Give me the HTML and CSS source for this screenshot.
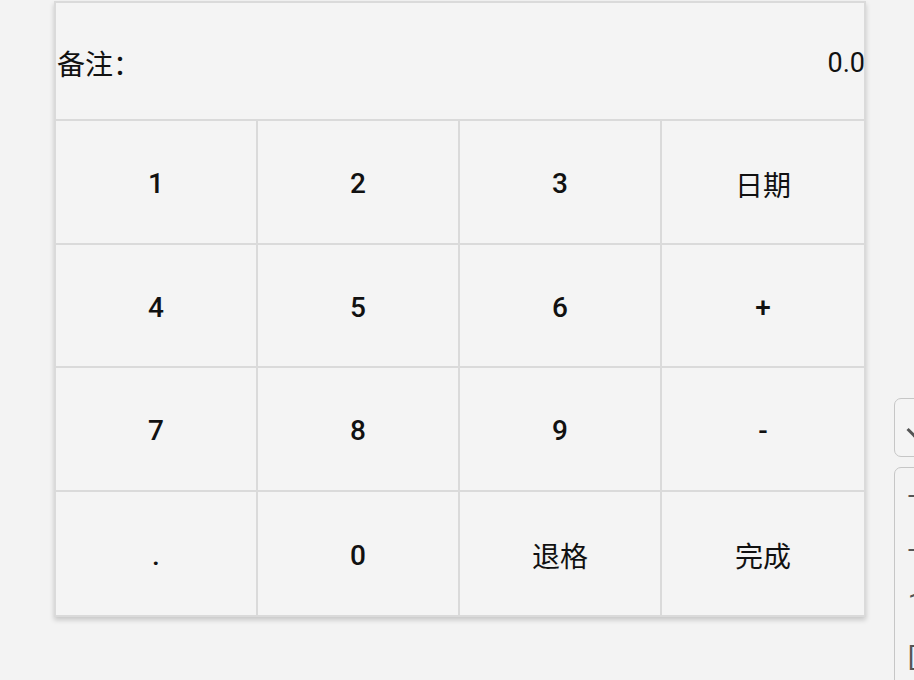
FILE: index.html
```html
<!DOCTYPE html>
<html lang="zh">
<head>
<meta charset="utf-8">
<link rel="stylesheet" href="styles.css">
</head>
<body>
<div class="page">
  <div class="panel">
    <div class="memo">
      <span class="memo-label">备注：</span>
      <span class="memo-amount">0.0</span>
    </div>
    <div class="keys">
      <div class="key">1</div>
      <div class="key">2</div>
      <div class="key">3</div>
      <div class="key cjk">日期</div>
      <div class="key">4</div>
      <div class="key">5</div>
      <div class="key">6</div>
      <div class="key">+</div>
      <div class="key">7</div>
      <div class="key">8</div>
      <div class="key">9</div>
      <div class="key">-</div>
      <div class="key">.</div>
      <div class="key">0</div>
      <div class="key cjk">退格</div>
      <div class="key cjk">完成</div>
    </div>
  </div>
  <div class="side">
    <div class="side-select"><span class="chev"></span></div>
    <div class="side-list">
      <span class="side-item">-</span>
      <span class="side-item">-</span>
      <span class="side-item">1</span>
      <span class="side-item">[</span>
    </div>
  </div>
</div>
</body>
</html>
```
FILE: styles.css
```css
html, body {
  margin: 0;
  padding: 0;
  background: #f3f3f3;
  width: 914px;
  height: 680px;
  overflow: hidden;
  font-family: Roboto, "Noto Sans CJK SC", sans-serif;
  color: #111;
}

.page {
  display: flex;
  align-items: flex-start;
  width: 914px;
  height: 680px;
  overflow: hidden;
}

.panel {
  flex: 0 0 812px;
  margin-left: 54px;
  margin-top: 1px;
  background: #f4f4f4;
  border: 2px solid #dadada;
  box-sizing: border-box;
  box-shadow: 0 3px 5px rgba(0, 0, 0, 0.18);
}

.memo {
  height: 118px;
  display: flex;
  align-items: center;
  justify-content: space-between;
  padding-top: 4px;
  box-sizing: border-box;
  border-bottom: 2px solid #dadada;
}

.memo-label {
  font-family: "Noto Sans CJK SC", sans-serif;
  font-size: 28px;
  margin-left: 1px;
}

.memo-amount {
  font-family: Roboto, sans-serif;
  font-size: 27px;
  margin-right: -1px;
}

.keys {
  display: grid;
  grid-template-columns: repeat(4, 1fr);
  grid-template-rows: repeat(4, 123.5px);
}

.key {
  display: flex;
  align-items: center;
  justify-content: center;
  font-size: 28px;
  font-weight: 500;
  padding-top: 4px;
  box-sizing: border-box;
  border-right: 2px solid #dadada;
  border-bottom: 2px solid #dadada;
}

.key:nth-child(4n) {
  border-right: none;
}

.key:nth-child(n+13) {
  border-bottom: none;
}

.key.cjk {
  font-family: "Noto Sans CJK SC", sans-serif;
  font-weight: 400;
  font-size: 28px;
}

.side {
  margin-left: 28px;
  margin-top: 398px;
  display: flex;
  flex-direction: column;
  gap: 10px;
  flex: 0 0 80px;
}

.side-select {
  height: 59px;
  border: 1.5px solid #c6c6c6;
  border-radius: 7px;
  box-sizing: border-box;
  background: #f4f4f4;
  position: relative;
}

.chev {
  position: absolute;
  left: 14px;
  top: 25px;
  width: 9px;
  height: 9px;
  border-left: 3px solid #555;
  border-bottom: 3px solid #555;
  transform: rotate(-45deg);
}

.side-list {
  height: 220px;
  border: 1.5px solid #c6c6c6;
  border-radius: 7px;
  box-sizing: border-box;
  display: flex;
  flex-direction: column;
  padding: 11px 0 0 13px;
  gap: 22px;
  font-size: 26px;
  color: #555;
  line-height: 32px;
}

.side-item {
  display: block;
}
```
